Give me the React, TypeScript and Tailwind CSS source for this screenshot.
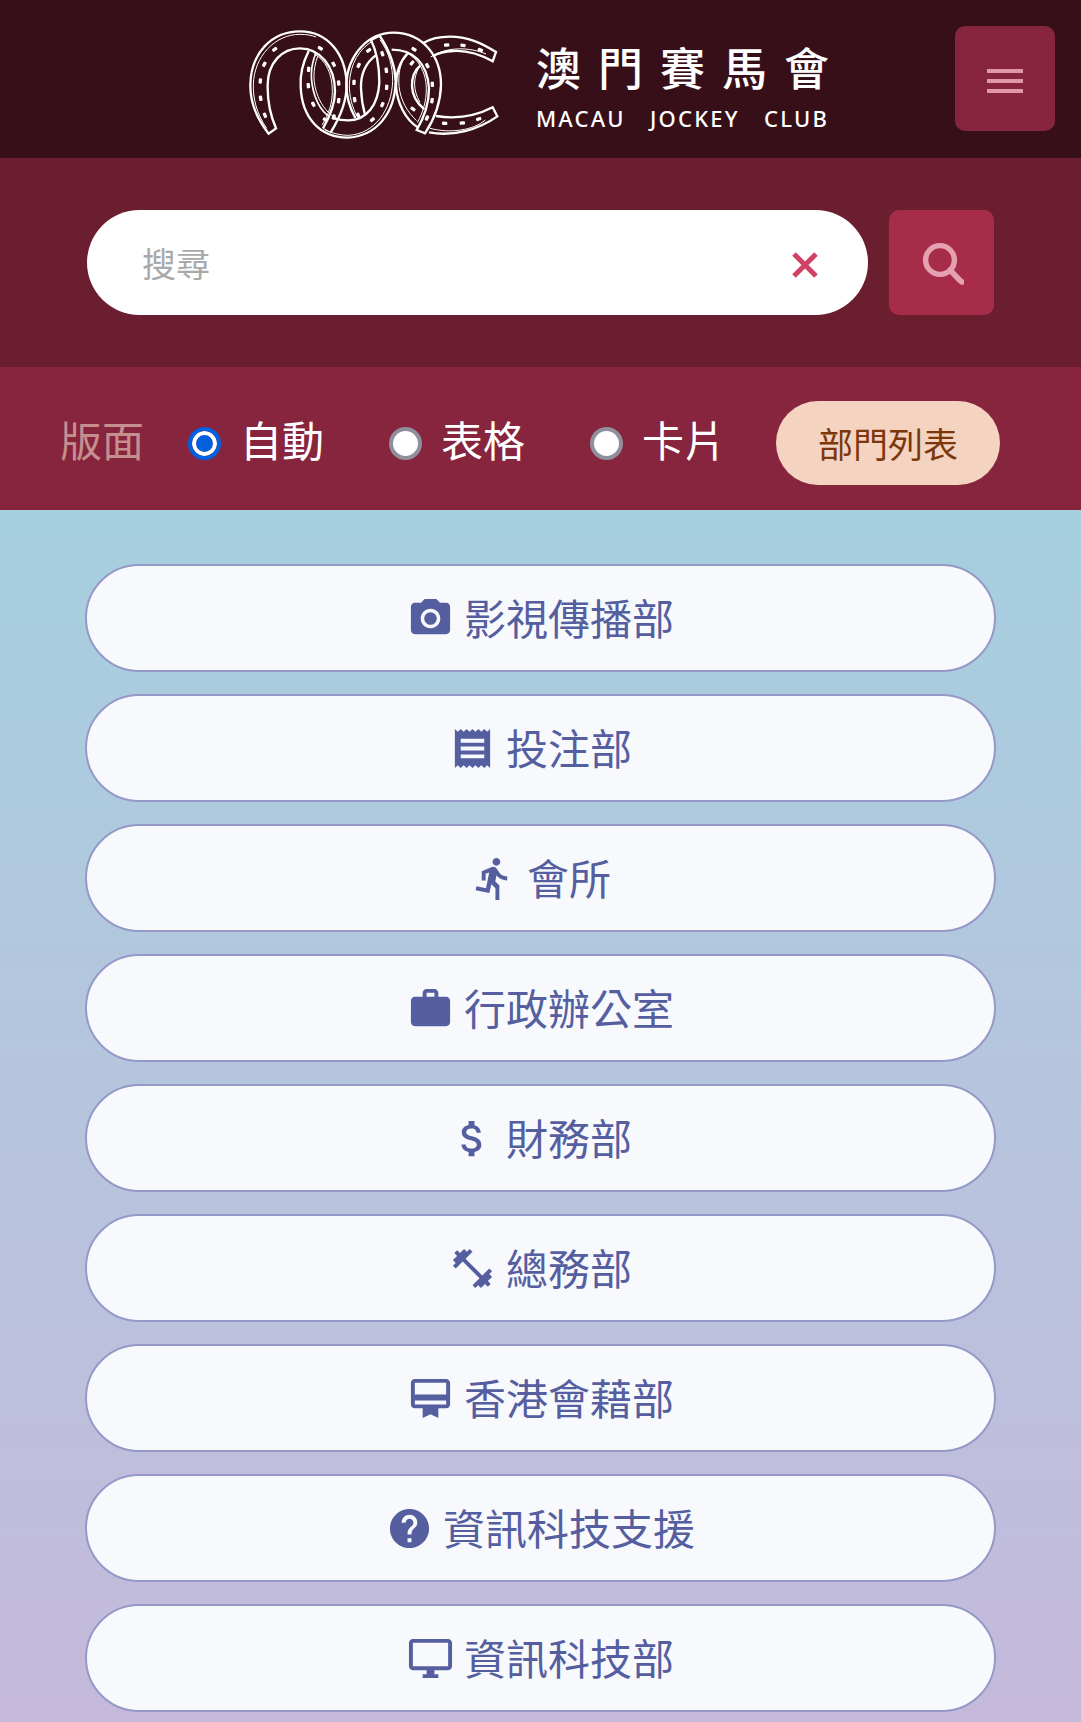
import {
  MdPhotoCamera, MdReceipt, MdDirectionsRun, MdWork, MdAttachMoney,
  MdFitnessCenter, MdCardMembership, MdHelp, MdOutlineDesktopWindows, MdMenu,
} from "react-icons/md";

const departments = [
  { name: "影視傳播部", Icon: MdPhotoCamera },
  { name: "投注部", Icon: MdReceipt },
  { name: "會所", Icon: MdDirectionsRun },
  { name: "行政辦公室", Icon: MdWork },
  { name: "財務部", Icon: MdAttachMoney },
  { name: "總務部", Icon: MdFitnessCenter },
  { name: "香港會藉部", Icon: MdCardMembership },
  { name: "資訊科技支援", Icon: MdHelp },
  { name: "資訊科技部", Icon: MdOutlineDesktopWindows },
];

const layouts = ["自動", "表格", "卡片"];

// Nail holes of the horseshoes: x, y, angle
const nails = [
  [104, 89, -35], [73, 134, -62], [61, 184, -85], [62, 236, 80], [75, 287, 68],
  [241, 86, 32], [281, 134, 62], [296, 190, 85], [296, 243, -82], [281, 292, -68],
  [206, 149, -86], [205, 198, 86], [220, 254, 62], [256, 300, 30],
  [397, 300, -38], [427, 255, -66], [440, 203, -86], [439, 152, 82], [427, 102, 70],
  [386, 92, -35], [356, 137, -65], [342, 188, -87], [344, 240, 82], [355, 287, 68],
  [522, 89, 32], [562, 138, 62], [577, 194, 86], [576, 243, -82], [561, 295, -66],
  [516, 130, -50], [519, 268, 38], [620, 76, -6], [669, 77, 8], [721, 91, 20],
  [614, 311, 3], [667, 310, -6], [716, 298, -18],
];

function Horseshoes() {
  return (
    <svg viewBox="24 25 756 339" className="mt-0.5 h-[113px] w-[252px] shrink-0" fill="none" stroke="#fff" aria-hidden="true">
      <g strokeWidth="7" strokeLinejoin="miter">
        <path d="M272 338C302 290 320 245 320 195C318 105 265 35 180 35C95 35 33 100 31 195C30 240 45 290 86 342L108 326C90 285 82 240 83 195C84 130 125 86 180 86C240 86 285 140 285 215C285 255 270 290 249 326" />
        <path d="M206 94C188 130 180 165 182 200C185 295 240 353 322 354C410 350 465 280 467 185C466 140 450 95 419 48L393 61C412 100 418 140 418 188C415 255 380 302 325 302C310 302 295 300 282 296" />
        <path d="M228 100C208 145 212 190 225 230C235 258 248 276 263 288" strokeWidth="5" />
        <path d="M346 295C328 262 319 230 319 195C322 105 385 39 460 39C550 40 603 110 603 195C602 250 585 295 555 341L530 331C555 290 567 250 567 205C562 130 520 90 455 90" />
        <path d="M410 105C375 130 362 165 363 205C364 235 368 260 375 285" />
        <path d="M550 70C575 55 600 51 630 51C680 51 720 67 768 97L758 125C710 98 670 92 640 94C615 95 595 100 578 110" />
        <path d="M503 101C480 125 468 160 468 200C472 250 495 300 536 325M541 137C520 155 515 175 516 200C517 225 530 250 553 269M588 289C650 299 710 288 758 263L772 290C715 330 640 352 567 338" />
      </g>
      <g strokeWidth="3">
        <path d="M80 326C49 281 39 235 40 195C42 110 105 44 180 44C200 44 215 47 228 52" />
        <path d="M222 102C257 122 277 160 277 215C277 250 266 285 246 316M249 326L272 338" />
        <path d="M420 60C448 100 458 140 458 185C455 270 405 343 325 347C300 347 275 340 255 331" />
        <path d="M233 110C218 150 218 190 234 230C245 258 266 285 290 296" />
        <path d="M352 292C336 262 328 230 328 195C330 130 359 87 398 64" />
        <path d="M495 97C538 117 558 160 559 205C559 245 550 275 532 309" />
        <path d="M489 120C478 145 475 170 477 200C482 242 500 275 530 303" />
        <path d="M536 145C520 175 518 210 540 248M572 112C620 80 690 82 738 103M570 326C630 342 700 332 736 301" />
      </g>
      <g fill="#fff" stroke="none">
        {nails.map(([x, y, angle]) => (
          <rect key={`${x}-${y}`} x={x - 8} y={y - 5} width="16" height="10" rx="3" transform={`rotate(${angle} ${x} ${y})`} />
        ))}
      </g>
    </svg>
  );
}

export default function App() {
  return (
    <div
      lang="zh-Hant"
      className="flex min-h-screen flex-col bg-[#a5cfdf] font-['Noto_Sans_CJK_TC',sans-serif]"
    >
      <header className="grid grid-cols-[1fr_auto_1fr] bg-[#370f18] pt-[26px] pb-[17px]">
        <a href="#" className="col-start-2 flex gap-9 pr-1 text-white" aria-label="澳門賽馬會 Macau Jockey Club">
          <Horseshoes />
          <div className="flex flex-col pt-4">
            <div className="flex gap-[17px] text-[45px] leading-[50px] font-medium">
              {["澳", "門", "賽", "馬", "會"].map((character) => (
                <span key={character}>{character}</span>
              ))}
            </div>
            <div className="mt-3 flex justify-between font-['Noto_Sans',sans-serif] text-[22px] leading-7 font-medium tracking-widest">
              <span>MACAU</span>
              <span>JOCKEY</span>
              <span>CLUB</span>
            </div>
          </div>
        </a>
        <button
          type="button"
          aria-label="選單"
          className="mr-[26px] flex h-[105px] w-[100px] items-center justify-center justify-self-end rounded-[10px] bg-[#86253d] text-[#e197aa]"
        >
          <MdMenu className="mt-1 size-12" />
        </button>
      </header>

      <form className="flex gap-[21px] bg-[#6a1e2f] px-[87px] py-[52px]" onSubmit={(e) => e.preventDefault()}>
        <div className="flex h-[105px] min-w-0 flex-1 items-center rounded-full bg-white pr-[45px] pl-[55px]">
          <input
            type="text"
            aria-label="搜尋"
            placeholder="搜尋"
            className="h-full min-w-0 flex-1 bg-transparent text-[34px] text-gray-800 outline-none placeholder:text-[#a9a9a9]"
          />
          <button type="button" aria-label="清除" className="mt-1 flex size-9 items-center justify-center text-[#cf4263]">
            <svg viewBox="0 0 26 26" className="size-[26px]" fill="none" stroke="currentColor" strokeWidth="5" aria-hidden="true">
              <path d="M2 2L24 24M24 2L2 24" />
            </svg>
          </button>
        </div>
        <button
          type="submit"
          aria-label="搜尋"
          className="flex size-[105px] items-center justify-center rounded-[10px] bg-[#a62c49] text-[#e5a0b2]"
        >
          <svg viewBox="0 0 42 44" className="mt-0.5 ml-0.5 h-11 w-[42px]" fill="none" stroke="currentColor" strokeWidth="5" aria-hidden="true">
            <circle cx="18" cy="18" r="14.4" strokeWidth="5.4" />
            <path d="M28 28L38 38.5Q39.5 40 40 40" strokeWidth="5.6" strokeLinecap="round" />
          </svg>
        </button>
      </form>

      <section className="flex items-center bg-[#86253d] pt-[34px] pr-20 pb-[25px] pl-[60px] text-[42px] leading-[60px] whitespace-nowrap text-white">
        <fieldset className="contents">
          <span id="layout-label" className="mr-11 pb-2 text-[#c58f90]">版面</span>
          <div role="radiogroup" aria-labelledby="layout-label" className="mr-[50px] flex gap-[65px]">
            {layouts.map((layout, i) => (
              <label key={layout} className="flex items-center gap-[19px]">
                <input
                  type="radio"
                  name="layout"
                  defaultChecked={i === 0}
                  className="size-[33px] appearance-none rounded-full border-4 border-[#8f8f9d] bg-white checked:border-[#0060df] checked:bg-[#0060df] checked:bg-clip-content checked:p-1 checked:shadow-[inset_0_0_0_4px_#fff]"
                />
                <span className="pb-2">{layout}</span>
              </label>
            ))}
          </div>
          <button type="button" className="h-[84px] rounded-full bg-[#f4d3c1] px-[42px] text-[35px] text-[#7c370d]">
            部門列表
          </button>
        </fieldset>
      </section>

      <main className="flex-1 bg-linear-to-b from-[#a5cfdf] to-[#c5b9db] px-[85px] pt-[54px] pb-[9px]">
        <nav className="flex flex-col gap-[22px]">
          {departments.map(({ name, Icon }) => (
            <a
              key={name}
              href="#"
              className="flex h-[108px] items-center justify-center gap-2.5 rounded-full border-2 border-[#9499c8] bg-[#f7f9fd] text-[42px] leading-[60px] text-[#555fa0]"
            >
              <Icon className="size-[47px] shrink-0" aria-hidden="true" />
              <span className="pb-0.5">{name}</span>
            </a>
          ))}
        </nav>
      </main>
    </div>
  );
}
